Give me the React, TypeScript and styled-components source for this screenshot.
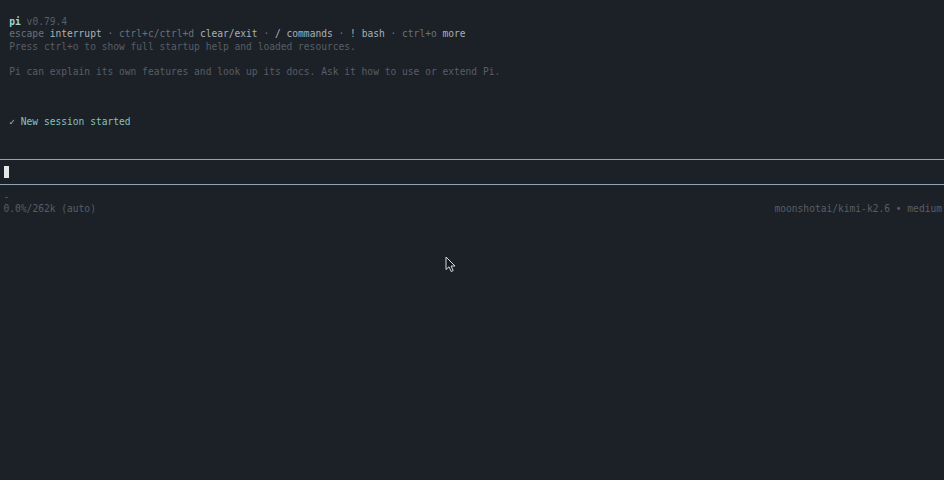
import React from "react";
import styled, { createGlobalStyle } from "styled-components";

const Global = createGlobalStyle`
  html, body { margin: 0; padding: 0; background: #1c2128; }
  #root { width: 944px; height: 480px; }
`;

const Terminal = styled.div`
  position: relative;
  width: 944px;
  height: 480px;
  box-sizing: border-box;
  padding: 15.5px 2px 0 3.5px;
  background: #1c2128;
  font-family: "DejaVu Sans Mono", "Liberation Mono", monospace;
  font-size: 9.6px;
  line-height: 12.5px;
  color: #6a7178;
  overflow: hidden;
  white-space: pre;
`;

const Row = styled.div<{ $indent?: boolean }>`
  height: 12.5px;
  display: flex;
  align-items: center;
  justify-content: space-between;
  padding-left: ${(p) => (p.$indent ? "5.78px" : "0")};
`;

const Rule = styled.div`
  height: 12.5px;
  display: flex;
  align-items: center;
  margin-left: -3.5px;
  margin-right: -2px;
  &::before {
    content: "";
    flex: 1;
    height: 1px;
    background: #8ea6b4;
  }
`;

const Span = styled.span<{ $tone?: "brand" | "bright" | "dim" | "faint" | "ok" }>`
  font-weight: ${(p) => (p.$tone === "brand" ? 700 : 400)};
  color: ${(p) =>
    p.$tone === "brand"
      ? "#9fd6cf"
      : p.$tone === "bright"
      ? "#aab1b8"
      : p.$tone === "faint"
      ? "#575e66"
      : p.$tone === "ok"
      ? "#86c3bb"
      : "#6a7178"};
`;

const Cursor = styled.span`
  display: inline-block;
  width: 5.5px;
  height: 12px;
  background: #e4e6e8;
`;

const Pointer = styled.svg`
  position: absolute;
  left: 445px;
  top: 256px;
`;

export default function App() {
  return (
    <>
      <Global />
      <Terminal>
        <Row $indent>
          <span>
            <Span $tone="brand">pi</Span>
            <Span $tone="faint"> v0.79.4</Span>
          </span>
        </Row>
        <Row $indent>
          <span>
            <Span>escape</Span>
            <Span $tone="bright"> interrupt</Span>
            <Span> · ctrl+c/ctrl+d</Span>
            <Span $tone="bright"> clear/exit</Span>
            <Span> · </Span>
            <Span $tone="bright">/ commands</Span>
            <Span> · </Span>
            <Span $tone="bright">! bash</Span>
            <Span> · ctrl+o</Span>
            <Span $tone="bright"> more</Span>
          </span>
        </Row>
        <Row $indent>
          <Span $tone="faint">Press ctrl+o to show full startup help and loaded resources.</Span>
        </Row>
        <Row />
        <Row $indent>
          <Span $tone="faint">Pi can explain its own features and look up its docs. Ask it how to use or extend Pi.</Span>
        </Row>
        <Row />
        <Row />
        <Row />
        <Row $indent>
          <Span $tone="ok">✓ New session started</Span>
        </Row>
        <Row />
        <Row />
        <Rule />
        <Row>
          <Cursor />
        </Row>
        <Rule />
        <Row>
          <Span $tone="faint">-</Span>
        </Row>
        <Row>
          <Span $tone="faint">0.0%/262k (auto)</Span>
          <Span $tone="faint">moonshotai/kimi-k2.6 • medium</Span>
        </Row>
        <Pointer width="12" height="17" viewBox="0 0 12 17">
          <path
            d="M1 1 L1 13.5 L4 10.8 L6.2 15.5 L8.2 14.6 L6.1 10 L10 10 Z"
            fill="#15181c"
            stroke="#d8dadc"
            strokeWidth="1"
            strokeLinejoin="round"
          />
        </Pointer>
      </Terminal>
    </>
  );
}
